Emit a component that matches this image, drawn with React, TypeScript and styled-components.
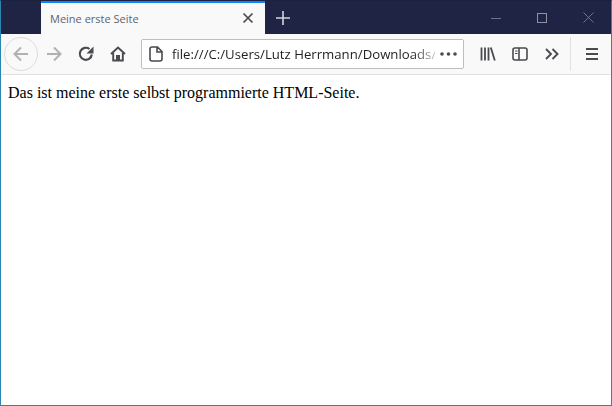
import React from 'react';
import styled, { createGlobalStyle } from 'styled-components';

const GlobalStyle = createGlobalStyle`
  html, body {
    margin: 0;
    padding: 0;
    background: #fff;
  }
`;

const Frame = styled.div`
  width: 612px;
  height: 406px;
  box-sizing: border-box;
  border: 1px solid #2a85b2;
  border-top-color: #1c2140;
  display: flex;
  flex-direction: column;
  overflow: hidden;
`;

const TitleBar = styled.div`
  height: 33px;
  flex: none;
  display: flex;
  background: #1f2344;
`;

const Tab = styled.div`
  width: 224px;
  margin-left: 40px;
  box-sizing: border-box;
  display: flex;
  align-items: center;
  justify-content: space-between;
  padding: 0 11px 1px 9px;
  background: #f9f9fa;
  border-top: 2px solid #0a84ff;
`;

const TabTitle = styled.span`
  font-family: "Open Sans", sans-serif;
  font-size: 11px;
  color: #5c6470;
`;

const NewTab = styled.div`
  width: 36px;
  display: flex;
  align-items: center;
  justify-content: center;
`;

const WindowControls = styled.div`
  margin-left: auto;
  display: flex;
  align-items: center;
`;

const WindowButton = styled.div`
  width: 46px;
  height: 33px;
  display: flex;
  align-items: center;
  justify-content: center;
`;

const Toolbar = styled.div`
  height: 41px;
  flex: none;
  box-sizing: border-box;
  display: flex;
  align-items: center;
  padding-left: 3px;
  background: #f9f9fa;
  border-bottom: 1px solid #e1e1e2;
`;

const ToolButton = styled.div<{ $width?: number }>`
  width: ${p => p.$width ?? 32}px;
  height: 32px;
  flex: none;
  display: flex;
  align-items: center;
  justify-content: center;
`;

const BackButton = styled(ToolButton)`
  width: 34px;
  height: 34px;
  box-sizing: border-box;
  border: 1px solid #dcdcdd;
  border-radius: 50%;
`;

const UrlBar = styled.div`
  width: 323px;
  height: 30px;
  margin-left: 8px;
  box-sizing: border-box;
  flex: none;
  display: flex;
  align-items: center;
  padding: 0 6px 0 7px;
  background: #fff;
  border: 1px solid #bebebf;
  border-radius: 2px;
`;

const UrlText = styled.div`
  width: 263px;
  margin-left: 9px;
  flex: none;
  white-space: nowrap;
  font-family: "Open Sans", sans-serif;
  font-size: 13.2px;
  color: #1f1f22;
  -webkit-mask-image: linear-gradient(to right, #000 240px, rgba(0, 0, 0, 0.25) 263px);
  mask-image: linear-gradient(to right, #000 240px, rgba(0, 0, 0, 0.25) 263px);
`;

const PageActions = styled.div`
  margin-left: auto;
  display: flex;
`;

const ToolGroup = styled.div`
  margin-left: 8px;
  display: flex;
`;

const Divider = styled.div`
  width: 1px;
  height: 34px;
  margin-left: 2px;
  flex: none;
  background: #e0e0e1;
`;

const Content = styled.main`
  flex: 1;
  padding: 9px 7px;
  background: #fff;
  font-family: "Liberation Serif", serif;
  font-size: 16px;
  color: #000;
`;

const Line = styled.p`
  margin: 0;
`;

const ICON = '#4a4a4f';
const MUTED = '#b1b1b3';

const App: React.FC = () => (
  <Frame>
    <GlobalStyle />
    <TitleBar>
      <Tab>
        <TabTitle>Meine erste Seite</TabTitle>
        <svg width="12" height="12" viewBox="0 0 12 12">
          <path d="M1.5 1.5l9 9M10.5 1.5l-9 9" stroke={ICON} strokeWidth="1.7" fill="none" />
        </svg>
      </Tab>
      <NewTab>
        <svg width="14" height="14" viewBox="0 0 14 14">
          <path d="M7 0v14M0 7h14" stroke="#d4d5dc" strokeWidth="1.6" fill="none" />
        </svg>
      </NewTab>
      <WindowControls>
        <WindowButton>
          <svg width="10" height="10" viewBox="0 0 10 10">
            <path d="M0 5.5h10" stroke="#6f7288" fill="none" />
          </svg>
        </WindowButton>
        <WindowButton>
          <svg width="10" height="10" viewBox="0 0 10 10">
            <rect x=".5" y=".5" width="9" height="9" stroke="#8f91a3" fill="none" />
          </svg>
        </WindowButton>
        <WindowButton>
          <svg width="11" height="11" viewBox="0 0 11 11">
            <path d="M.5.5l10 10M10.5.5l-10 10" stroke="#6f7288" fill="none" />
          </svg>
        </WindowButton>
      </WindowControls>
    </TitleBar>
    <Toolbar>
      <BackButton>
        <svg width="16" height="16" viewBox="0 0 16 16">
          <path d="M15 8H2M8 1.5L1.5 8 8 14.5" stroke={MUTED} strokeWidth="2" fill="none" />
        </svg>
      </BackButton>
      <ToolButton>
        <svg width="16" height="16" viewBox="0 0 16 16">
          <path d="M1 8h13M8 1.5L14.5 8 8 14.5" stroke={MUTED} strokeWidth="2" fill="none" />
        </svg>
      </ToolButton>
      <ToolButton>
        <svg width="16" height="16" viewBox="0 0 16 16">
          <path d="M13.8 8.5A6 6 0 1 1 11.5 3" stroke={ICON} strokeWidth="2.2" fill="none" />
          <path d="M15.5 .5v7h-7z" fill={ICON} />
        </svg>
      </ToolButton>
      <ToolButton $width={31}>
        <svg width="16" height="16" viewBox="0 0 16 16">
          <path d="M1 8L8 1.5 15 8M3.2 7v7.5h9.6V7" stroke={ICON} strokeWidth="1.9" fill="none" />
          <rect x="6" y="9" width="4" height="5.5" fill={ICON} />
        </svg>
      </ToolButton>
      <UrlBar>
        <svg width="14" height="16" viewBox="0 0 14 16">
          <path
            d="M3 1h5.5L13 5.5V13a2 2 0 0 1-2 2H3a2 2 0 0 1-2-2V3a2 2 0 0 1 2-2zM8 1.5V6h4.5"
            stroke={ICON}
            strokeWidth="1.6"
            fill="none"
          />
        </svg>
        <UrlText>file:///C:/Users/Lutz Herrmann/Downloads/</UrlText>
        <PageActions>
          <svg width="17" height="4" viewBox="0 0 17 4">
            <circle cx="2" cy="2" r="1.8" fill={ICON} />
            <circle cx="8.5" cy="2" r="1.8" fill={ICON} />
            <circle cx="15" cy="2" r="1.8" fill={ICON} />
          </svg>
        </PageActions>
      </UrlBar>
      <ToolGroup>
        <ToolButton>
          <svg width="16" height="16" viewBox="0 0 16 16">
            <path d="M1.5 1.5v13M5 1.5v13M8.5 1.5v13M10.8 1.5l4 13" stroke={ICON} strokeWidth="1.8" fill="none" />
          </svg>
        </ToolButton>
        <ToolButton>
          <svg width="16" height="14" viewBox="0 0 16 14">
            <rect x="1" y="1" width="14" height="12" rx="2" stroke={ICON} strokeWidth="1.6" fill="none" />
            <path d="M7 1v12" stroke={ICON} strokeWidth="1.6" />
            <path d="M3 4h2.5M3 6.5h2.5" stroke={ICON} strokeWidth="1" />
          </svg>
        </ToolButton>
        <ToolButton>
          <svg width="14" height="12" viewBox="0 0 14 12">
            <path d="M1 1l5 5-5 5M7.5 1l5 5-5 5" stroke={ICON} strokeWidth="1.9" fill="none" />
          </svg>
        </ToolButton>
      </ToolGroup>
      <Divider />
      <ToolButton $width={41}>
        <svg width="12" height="12" viewBox="0 0 12 12">
          <path d="M0 1h12M0 6h12M0 11h12" stroke={ICON} strokeWidth="2" fill="none" />
        </svg>
      </ToolButton>
    </Toolbar>
    <Content>
      <Line>Das ist meine erste selbst programmierte HTML-Seite.</Line>
    </Content>
  </Frame>
);

export default App;
